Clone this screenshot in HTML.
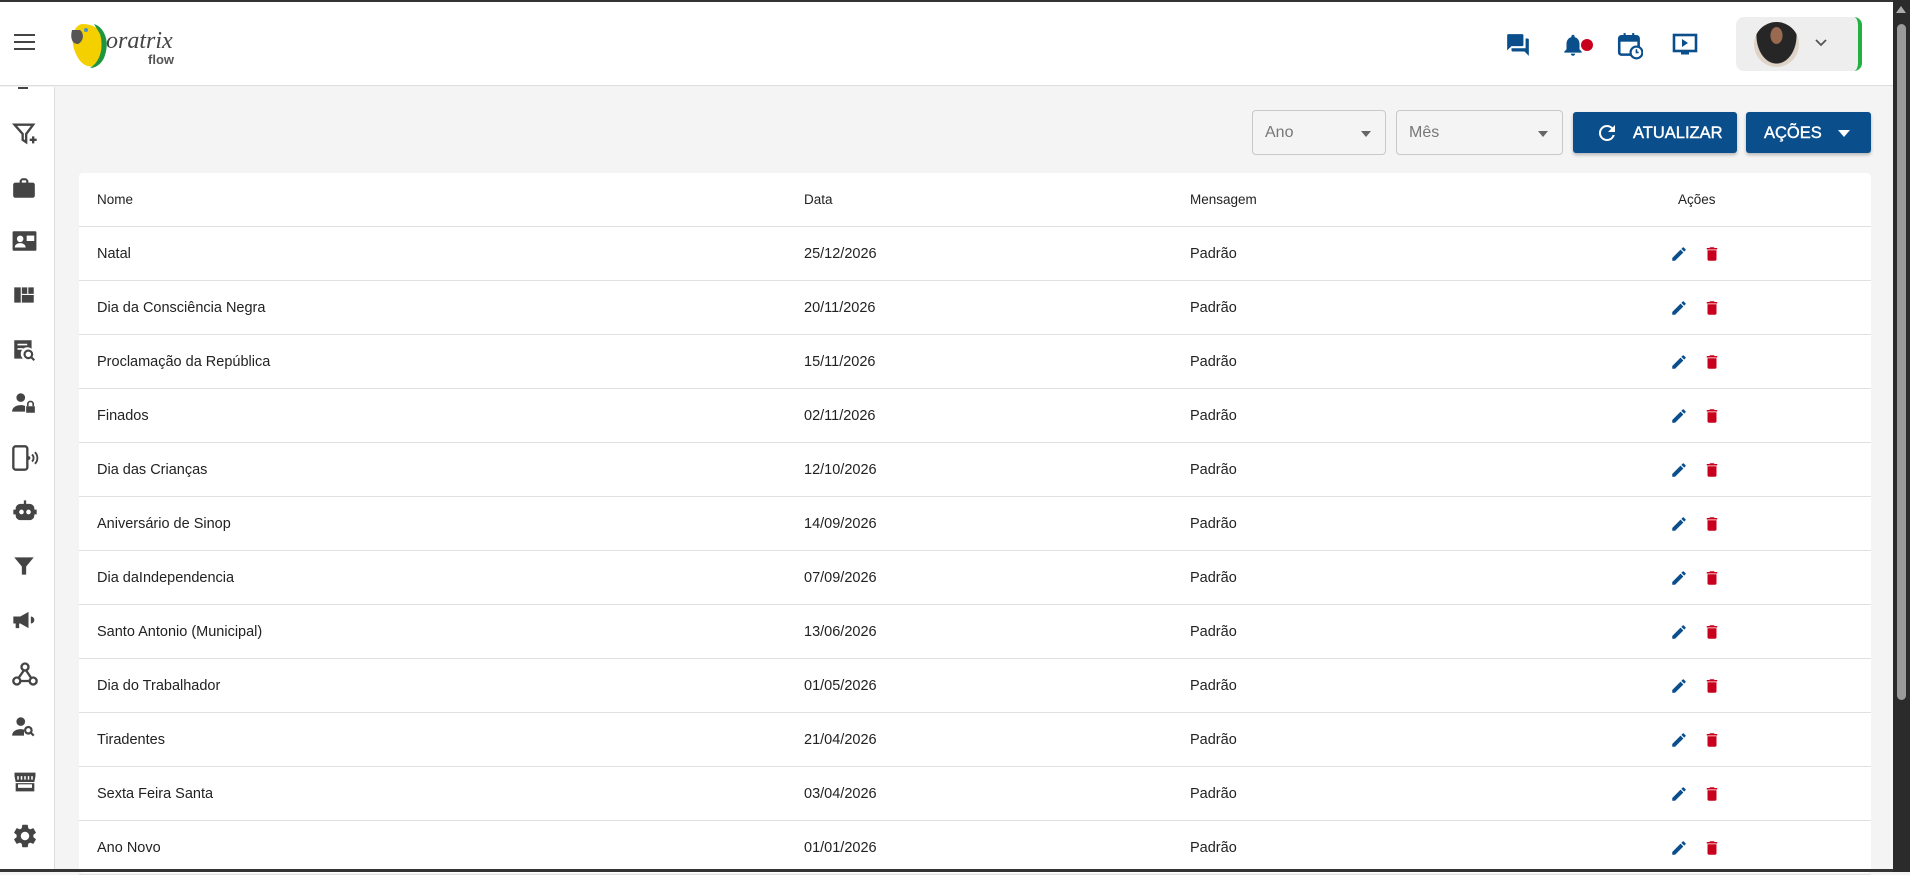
<!DOCTYPE html>
<html><head><meta charset="utf-8"><style>
*{box-sizing:border-box;margin:0;padding:0}
body{width:1910px;height:872px;overflow:hidden;background:#f4f4f4;font-family:"Liberation Sans",sans-serif;color:#222;position:relative}
.topb{position:absolute;left:0;top:0;width:1910px;height:2px;background:#333}
.hdr{position:absolute;left:0;top:2px;width:1893px;height:84px;background:#fff;border-bottom:1px solid #ddd}
.side{position:absolute;left:0;top:87px;width:55px;height:785px;background:#fff;border-right:1px solid #ddd}
.sb{position:absolute;right:0;top:0;width:17px;height:872px;background:#2b2b2b}
.sb .th{position:absolute;left:4px;top:24px;width:9px;height:676px;background:#9a9a9a;border-radius:5px}
.card{position:absolute;left:79px;top:173px;width:1792px;height:700px;background:#fff;border-radius:4px}
.row{position:absolute;left:0;width:1792px;height:54px;border-bottom:1px solid #e0e0e0;font-size:14.5px}
.row span{position:absolute;top:19px}
.c1{left:18px}.c2{left:725px}.c3{left:1111px}
.ed{position:absolute;left:1591px;top:18px}.dl{position:absolute;left:1624px;top:18px}
.sel{position:absolute;top:110px;height:45px;background:#f4f4f4;border:1px solid #c8c8c8;border-radius:4px;font-size:16px;color:#777;padding:13px 0 0 12px}
.sel i{position:absolute;right:14px;top:20px;border:5px solid transparent;border-top:6px solid #666}
.btn{position:absolute;top:112px;height:41px;background:#0a4f8c;border-radius:3px;color:#fff;font-size:16.5px;box-shadow:0 2px 3px rgba(0,0,0,.25);-webkit-text-stroke:0.4px #fff}
.si{position:absolute;left:11px}
</style></head><body>
<div class="topb"></div>
<div class="hdr">
 <div style="position:absolute;left:14px;top:39px;width:21px;height:2px;background:#444;box-shadow:0 -7px 0 #444,0 7px 0 #444"></div>
 <svg style="position:absolute;left:68px;top:18px" width="120" height="52" viewBox="0 0 120 52">
  <path d="M14 4 C4 6 2 22 8 34 C12 44 20 48 26 46 C34 42 38 28 36 18 C34 10 26 4 14 4Z" fill="#f5d000"/>
  <path d="M26 4 C38 8 42 24 36 38 C32 46 26 48 22 48 C32 42 36 28 32 14 Z" fill="#1e9640"/>
  <path d="M4 10 C2 18 4 24 10 24 C15 22 17 14 12 10 Z" fill="#555"/>
  <circle cx="18" cy="10" r="2" fill="#4a8fd0"/>
  <text x="38" y="28" font-family="Liberation Serif,serif" font-style="italic" font-size="24" fill="#444">oratrix</text>
  <text x="80" y="44" font-size="13" font-weight="bold" fill="#555" font-family="Liberation Sans,sans-serif">flow</text>
 </svg>
 <svg style="position:absolute;left:1505px;top:30px" width="26" height="26" viewBox="0 0 24 24"><path fill="#0a4f8c" d="M21 6h-2v9H6v2c0 .55.45 1 1 1h11l4 4V7c0-.55-.45-1-1-1zm-4 6V3c0-.55-.45-1-1-1H3c-.55 0-1 .45-1 1v14l4-4h10c.55 0 1-.45 1-1z"/></svg>
 <svg style="position:absolute;left:1560px;top:30px" width="26" height="26" viewBox="0 0 24 24"><path fill="#0a4f8c" d="M12 22c1.1 0 2-.9 2-2h-4c0 1.1.9 2 2 2zm6-6v-5c0-3.07-1.640-5.64-4.5-6.32V4c0-.83-.67-1.5-1.5-1.5s-1.5.67-1.5 1.5v.68C7.63 5.36 6 7.92 6 11v5l-2 2v1h16v-1l-2-2z"/></svg>
 <div style="position:absolute;left:1581px;top:37px;width:12px;height:12px;border-radius:50%;background:#c8001e"></div>
 <svg style="position:absolute;left:1617px;top:30px" width="26" height="28" viewBox="0 0 24 26"><rect x="2" y="4" width="18" height="17" rx="2" fill="none" stroke="#0a4f8c" stroke-width="2.4"/><rect x="2" y="4" width="18" height="5" fill="#0a4f8c"/><rect x="6" y="1" width="2" height="4" fill="#0a4f8c"/><rect x="14" y="1" width="2" height="4" fill="#0a4f8c"/><circle cx="18" cy="19" r="5.5" fill="#fff" stroke="#0a4f8c" stroke-width="2"/><path d="M18 16v3h2" stroke="#0a4f8c" stroke-width="1.5" fill="none"/></svg>
 <svg style="position:absolute;left:1672px;top:31px" width="26" height="24" viewBox="0 0 26 24"><rect x="2" y="2" width="22" height="16" fill="none" stroke="#0a4f8c" stroke-width="2.6"/><path d="M10 6v8l6-4z" fill="#0a4f8c"/><rect x="9" y="19" width="8" height="2.5" fill="#0a4f8c"/></svg>
 <div style="position:absolute;left:1736px;top:15px;width:126px;height:54px;background:#eee;border-radius:8px;border-right:4px solid #22b040">
  <div style="position:absolute;left:18px;top:5px;width:45px;height:45px;border-radius:50%;background:radial-gradient(ellipse at 50% 30%,#9a6a50 0 18%,#262626 20% 62%,#e0d4c8 64%)"></div>
  <svg style="position:absolute;left:78px;top:21px" width="14" height="10"><path d="M2 2l5 5 5-5" stroke="#555" stroke-width="1.8" fill="none"/></svg>
 </div>
</div>
<div class="side">
 <div style="position:absolute;left:18px;top:0;width:10px;height:2px;background:#444"></div>
 <svg class="si" style="top:33px" width="28" height="28" viewBox="0 0 24 24"><path d="M3 4h16l-6 8v7l-3-2v-5z" fill="none" stroke="#444" stroke-width="2"/><path d="M16 17h6M19 14v6" stroke="#444" stroke-width="2"/></svg>
 <svg class="si" style="top:88px" width="26" height="26" viewBox="0 0 24 24"><path fill="#444" d="M20 7h-4V5l-2-2h-4L8 5v2H4c-1.1 0-2 .9-2 2v10c0 1.1.9 2 2 2h16c1.1 0 2-.9 2-2V9c0-1.1-.9-2-2-2zm-6 0h-4V5h4v2z"/></svg>
 <svg class="si" style="top:141px" width="27" height="26" viewBox="0 0 24 24"><rect x="1" y="3" width="22" height="18" rx="1" fill="#444"/><circle cx="8" cy="10" r="3" fill="#fff"/><path d="M3 18c0-3 3-4 5-4s5 1 5 4z" fill="#fff"/><rect x="14" y="7" width="7" height="5" fill="#fff"/></svg>
 <svg class="si" style="top:195px" width="26" height="26" viewBox="0 0 24 24"><path fill="#444" d="M3 5h6v14H3zM10 5h5v6h-5zM16 5h5v6h-5zM10 12h11v7H10z"/></svg>
 <svg class="si" style="top:250px" width="26" height="26" viewBox="0 0 24 24"><path fill="#444" d="M3 3h16v8a6 6 0 0 0-8 9H3z"/><circle cx="16" cy="16" r="3.5" fill="none" stroke="#444" stroke-width="2"/><path d="M18.5 18.5l3 3" stroke="#444" stroke-width="2"/><path d="M6 7h9M6 11h5" stroke="#fff" stroke-width="1.5"/></svg>
 <svg class="si" style="top:303px" width="26" height="26" viewBox="0 0 24 24"><circle cx="9" cy="7" r="4" fill="#444"/><path d="M1 20c0-4 4-6 8-6 2 0 3 .3 4 .8V20z" fill="#444"/><rect x="14" y="15" width="8" height="6" fill="#444"/><path d="M15.5 15v-2a2.5 2.5 0 0 1 5 0v2" stroke="#444" stroke-width="1.5" fill="none"/></svg>
 <svg class="si" style="top:357px" width="28" height="28" viewBox="0 0 24 24"><rect x="2" y="2" width="12" height="20" rx="2" fill="none" stroke="#444" stroke-width="2"/><circle cx="15" cy="12" r="1.6" fill="#444"/><path d="M18 9a4 4 0 0 1 0 6M20.5 7a7 7 0 0 1 0 10" stroke="#444" stroke-width="1.6" fill="none"/></svg>
 <svg class="si" style="top:411px" width="28" height="28" viewBox="0 0 24 24"><path fill="#444" d="M11 2h2v4h-2zM4 9a4 4 0 0 1 4-4h8a4 4 0 0 1 4 4v1h2v4h-2v1a4 4 0 0 1-4 4H8a4 4 0 0 1-4-4v-1H2v-4h2z"/><circle cx="9" cy="12" r="2" fill="#fff"/><circle cx="15" cy="12" r="2" fill="#fff"/></svg>
 <svg class="si" style="top:466px" width="26" height="26" viewBox="0 0 24 24"><path fill="#444" d="M3 4h18l-7 8.5V20h-4v-7.5z"/></svg>
 <svg class="si" style="top:519px" width="28" height="28" viewBox="0 0 24 24"><path fill="#444" d="M2 9h6l7-4v14l-7-4H7v4H4v-4H2zM17 9a3 3 0 0 1 0 6z"/></svg>
 <svg class="si" style="top:573px" width="28" height="28" viewBox="0 0 24 24"><circle cx="12" cy="6" r="3" fill="none" stroke="#444" stroke-width="2"/><circle cx="5" cy="18" r="3" fill="none" stroke="#444" stroke-width="2"/><circle cx="19" cy="18" r="3" fill="none" stroke="#444" stroke-width="2"/><path d="M11 9l-5 7M13 9l4 6M8 18h8" stroke="#444" stroke-width="2"/></svg>
 <svg class="si" style="top:627px" width="26" height="26" viewBox="0 0 24 24"><circle cx="9" cy="7" r="4" fill="#444"/><path d="M1 20c0-4 4-6 8-6 1 0 2 .1 3 .4V20z" fill="#444"/><circle cx="16" cy="15" r="3" fill="none" stroke="#444" stroke-width="2"/><path d="M18 17l3 3" stroke="#444" stroke-width="2"/></svg>
 <svg class="si" style="top:681px" width="28" height="28" viewBox="0 0 24 24"><path fill="#444" d="M3 4h18v3l-1 5H4L3 7zM4 13h16v7H4z"/><path d="M6 7v3M9 7v3M12 7v3M15 7v3M18 7v3" stroke="#fff" stroke-width="1.3"/><rect x="6" y="14" width="12" height="3" fill="#fff"/></svg>
 <svg class="si" style="top:735px" width="28" height="28" viewBox="0 0 24 24"><path fill="#444" d="M19.14 12.94c.04-.3.06-.61.06-.94 0-.32-.02-.64-.07-.94l2.030-1.580a.49.49 0 0 0 .12-.61l-1.920-3.320a.488.488 0 0 0-.59-.22l-2.390.96c-.5-.38-1.030-.7-1.620-.94l-.36-2.540a.484.484 0 0 0-.48-.41h-3.840c-.24 0-.43.17-.47.41l-.36 2.540c-.59.24-1.130.57-1.620.94l-2.390-.96c-.22-.08-.47 0-.59.22L2.740 8.870c-.12.21-.08.47.12.61l2.030 1.580c-.05.3-.09.63-.09.94s.02.64.07.94l-2.030 1.580a.49.49 0 0 0-.12.61l1.920 3.320c.12.22.37.29.59.22l2.390-.96c.5.38 1.030.7 1.620.94l.36 2.540c.05.24.24.41.48.41h3.840c.24 0 .44-.17.47-.41l.36-2.540c.59-.24 1.130-.56 1.620-.94l2.390.96c.22.08.47 0 .59-.22l1.920-3.320c.12-.22.07-.47-.12-.61l-2.010-1.580zM12 15.6c-1.980 0-3.600-1.620-3.600-3.600s1.620-3.600 3.600-3.600 3.600 1.620 3.600 3.600-1.620 3.600-3.600 3.600z"/></svg>
</div>
<div class="sel" style="left:1252px;width:134px">Ano<i></i></div>
<div class="sel" style="left:1396px;width:167px">Mês<i></i></div>
<div class="btn" style="left:1573px;width:164px">
 <svg style="position:absolute;left:22px;top:9px" width="24" height="24" viewBox="0 0 24 24"><path fill="#fff" d="M17.65 6.35A7.958 7.958 0 0 0 12 4a8 8 0 1 0 7.73 10h-2.08A5.99 5.99 0 0 1 12 18c-3.31 0-6-2.69-6-6s2.69-6 6-6c1.66 0 3.14.69 4.22 1.78L13 11h7V4l-2.35 2.35z"/></svg>
 <span style="position:absolute;left:60px;top:12px">ATUALIZAR</span></div>
<div class="btn" style="left:1746px;width:125px"><span style="position:absolute;left:18px;top:12px">AÇÕES</span><i style="position:absolute;left:92px;top:18px;border:6px solid transparent;border-top:7px solid #fff"></i></div>
<div class="card">
 <div class="row" style="top:0;font-size:13.5px"><span class="c1">Nome</span><span class="c2">Data</span><span class="c3">Mensagem</span><span style="left:1599px">Ações</span></div>
</div>
<div class="sb"><div class="th"></div><div style="position:absolute;left:3px;top:6px;border:5px solid transparent;border-bottom:7px solid #aaa;border-top:0"></div></div>
<div style="position:absolute;left:0;bottom:0;width:1893px;height:3px;background:#333"></div>
<script>
var d=[["Natal","25/12/2026"],["Dia da Consciência Negra","20/11/2026"],["Proclamação da República","15/11/2026"],["Finados","02/11/2026"],["Dia das Crianças","12/10/2026"],["Aniversário de Sinop","14/09/2026"],["Dia daIndependencia","07/09/2026"],["Santo Antonio (Municipal)","13/06/2026"],["Dia do Trabalhador","01/05/2026"],["Tiradentes","21/04/2026"],["Sexta Feira Santa","03/04/2026"],["Ano Novo","01/01/2026"]];
var c=document.querySelector('.card'),h='';
d.forEach(function(r,i){h+='<div class="row" style="top:'+(54+i*54)+'px"><span class="c1">'+r[0]+'</span><span class="c2">'+r[1]+'</span><span class="c3">Padrão</span>'+
'<svg class="ed" width="18" height="18" viewBox="0 0 24 24"><path fill="#0a4f8c" d="M3 17.25V21h3.75L17.81 9.94l-3.75-3.75L3 17.25zM20.71 7.04a1 1 0 0 0 0-1.41l-2.34-2.34a1 1 0 0 0-1.41 0l-1.83 1.83 3.75 3.75 1.83-1.83z"/></svg>'+
'<svg class="dl" width="18" height="18" viewBox="0 0 24 24"><path fill="#c8001e" d="M6 19c0 1.1.9 2 2 2h8c1.1 0 2-.9 2-2V7H6v12zM19 4h-3.5l-1-1h-5l-1 1H5v2h14V4z"/></svg></div>'});
c.innerHTML+=h;
</script>
</body></html>
